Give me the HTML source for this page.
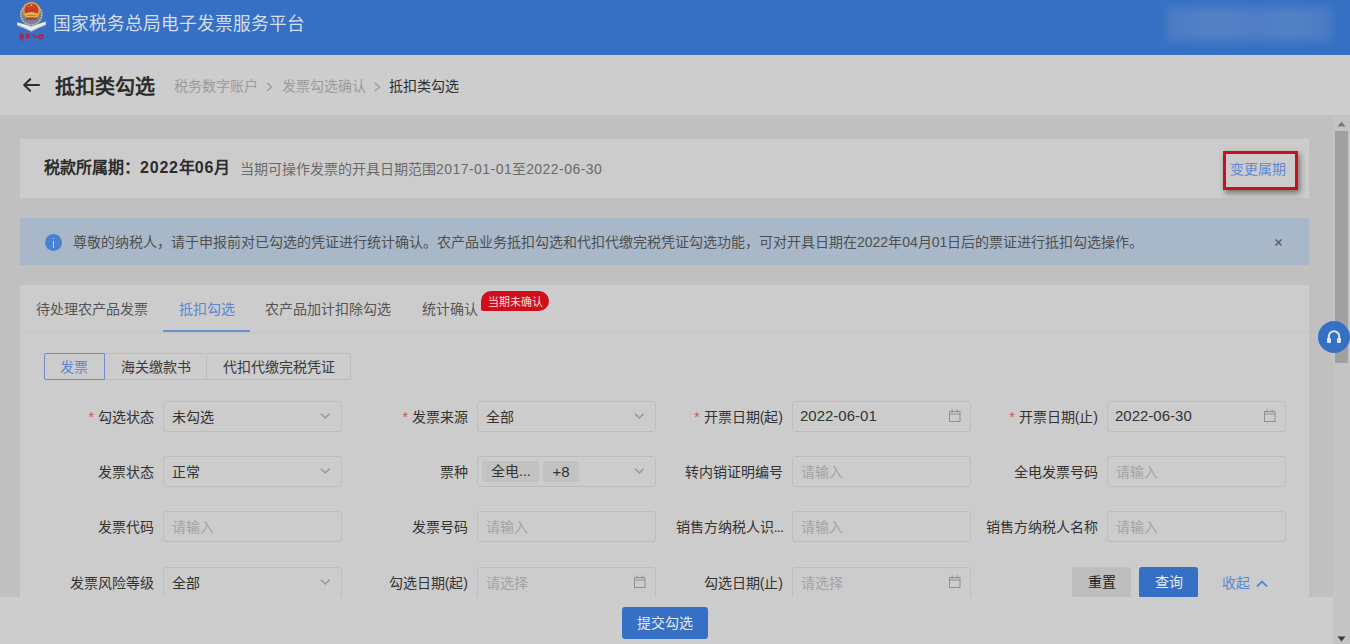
<!DOCTYPE html>
<html lang="zh-CN"><head><meta charset="utf-8">
<style>
*{box-sizing:border-box;margin:0;padding:0}
html,body{width:1350px;height:644px;overflow:hidden;background:#c0c0c0;font-family:"Liberation Sans",sans-serif;color:#333;font-weight:500}
.abs{position:absolute}
#hdr{left:0;top:0;width:1350px;height:55px;background:#3570c4}
#hdr .title{left:52.5px;top:12.5px;font-weight:400;font-size:17.7px;line-height:22px;color:#d6deeb;white-space:nowrap}
#blur{left:1166px;top:7px;width:166px;height:34px;background:linear-gradient(90deg,#4a7bc4 0%,#5582c6 30%,#4f7dc5 55%,#5482c6 75%,#4a7ac4 100%);filter:blur(4px)}
#sub{left:0;top:55px;width:1350px;height:60px;background:#cdcdcd}
#main{left:0;top:115px;width:1333px;height:482px;background:#c0c0c0}
.card{position:absolute;left:20px;width:1289px;background:#cccccc}
#c1{top:139px;height:59px}
#alert{left:20px;top:218px;width:1289px;height:47px;background:#a9b8c9}
#c2{top:285px;height:312px}
#footer{left:0;top:597px;width:1333px;height:47px;background:#cdcdcd}
#sb{left:1333px;top:115px;width:17px;height:529px;background:#c4c4c4}
.nw{white-space:nowrap}
</style></head>
<body>
<div id="hdr" class="abs">
  <svg class="abs" style="left:14px;top:0" width="36" height="44" viewBox="0 0 36 44">
    <ellipse cx="17.3" cy="14.5" rx="11.6" ry="11.5" fill="#7d828c"/>
    <ellipse cx="17.3" cy="14.5" rx="10.4" ry="10.3" fill="none" stroke="#c3c6cc" stroke-width="1.3" stroke-dasharray="1.6 1.1"/>
    <circle cx="17.4" cy="10.4" r="8.7" fill="#d6a545"/>
    <circle cx="17.4" cy="10.4" r="7" fill="#cc392b"/>
    <path d="M11.2 13.6 Q17.4 10.6 23.6 13.6 L23.6 17.2 L11.2 17.2Z" fill="#e3b24b"/>
    <path d="M12.8 15.5 H22" stroke="#cc392b" stroke-width="0.6"/>
    <circle cx="17.4" cy="5.2" r="1" fill="#e6b64a"/>
    <circle cx="14.9" cy="6.8" r="0.55" fill="#e6b64a"/><circle cx="19.9" cy="6.8" r="0.55" fill="#e6b64a"/>
    <path d="M11.5 17.4 L23.3 17.4 L22.2 20 L12.6 20Z" fill="#b3403a"/>
    <path d="M3.2 22.2 Q10 24 17.3 26.6 Q24.6 24 31.8 21.6 L31.8 25 Q24.6 27.6 17.3 31.4 Q10 27.6 3.2 25.4Z" fill="#e8eaef"/>
    <path d="M3.6 25.2 Q10 27.4 17.3 31.2 Q24.6 27.4 31.6 24.8" stroke="#a9adb6" stroke-width="0.8" fill="none"/>
    <path d="M5.5 38 H9.5 M7.5 32.5 V41.5 M5.8 35 H9.2 V37.6 H5.8Z" stroke="#b52538" stroke-width="1.4" fill="none"/>
    <path d="M11.5 35 Q13.5 33.5 15.5 35.5 Q14.5 38.3 11.8 38.3 M12.3 36 L15 37.8" stroke="#b52538" stroke-width="1.5" fill="none"/>
    <path d="M17.5 35.3 Q19 34.3 20 36 L20.5 38.3 M21.5 35 L23 37.8" stroke="#b52538" stroke-width="1.4" fill="none"/>
    <path d="M24.5 36 Q26.5 34 28.5 35.5 Q29.5 37.8 26.5 38.8 Q25 38.3 24.5 36Z M27.5 34.3 L29.5 36.2" stroke="#b52538" stroke-width="1.5" fill="none"/>
  </svg>
  <div class="abs title">国家税务总局电子发票服务平台</div>
  <div id="blur" class="abs"></div>
</div>
<div id="sub" class="abs"></div>
  <svg class="abs" style="left:22px;top:77px" width="20" height="16" viewBox="0 0 20 16"><path d="M2.2 8 H17 M8.2 2.2 L2.2 8 L8.2 13.8" stroke="#2e2e2e" stroke-width="2.1" fill="none" stroke-linecap="round" stroke-linejoin="round"/></svg>
<div class="abs nw" style="left:55px;top:74px;font-size:20px;line-height:26px;font-weight:bold;color:#2b2b2b">抵扣类勾选</div>
<div class="abs nw" style="left:174px;top:77px;font-size:14px;line-height:18px;color:#9b9b9b;font-weight:400">税务数字账户</div>
<div class="abs nw" style="left:282px;top:77px;font-size:14px;line-height:18px;color:#9b9b9b;font-weight:400">发票勾选确认</div>
<div class="abs nw" style="left:388.5px;top:77px;font-size:14px;line-height:18px;color:#2f2f2f">抵扣类勾选</div>
<svg class="abs" style="left:265px;top:82px" width="9" height="10" viewBox="0 0 9 10"><path d="M2 1 L6.5 5 L2 9" stroke="#9b9b9b" stroke-width="1.3" fill="none"/></svg>
<svg class="abs" style="left:372.5px;top:82px" width="9" height="10" viewBox="0 0 9 10"><path d="M2 1 L6.5 5 L2 9" stroke="#9b9b9b" stroke-width="1.3" fill="none"/></svg>
<div id="main" class="abs"></div>
<div class="card" id="c1"></div>
<div class="abs nw" style="left:44px;top:158px;font-size:16px;line-height:20px;font-weight:bold;color:#2b2b2b">税款所属期：<span style="letter-spacing:0.8px">2022</span>年<span style="letter-spacing:0.8px">06</span>月</div>
<div class="abs nw" style="left:240px;top:160px;font-size:14px;line-height:18px;color:#6a6a6a;font-weight:400">当期可操作发票的开具日期范围<span style="letter-spacing:0.45px">2017-01-01</span>至<span style="letter-spacing:0.45px">2022-06-30</span></div>
<div class="abs" style="left:1223px;top:151px;width:75px;height:39px;border:3px solid #c8101e;box-shadow:2px 3px 6px rgba(0,0,0,0.45)"></div>
<div class="abs nw" style="left:1230px;top:160px;font-size:14px;line-height:18px;color:#6089d0;font-weight:400">变更属期</div>
<div id="alert" class="abs"></div>
<div class="abs" style="left:45px;top:234px;width:17px;height:17px;border-radius:50%;background:#4a80d2"></div>
<div class="abs" style="left:52.5px;top:237.5px;width:1.6px;height:1.8px;background:#c9d5e8"></div>
<div class="abs" style="left:52.5px;top:240.5px;width:1.6px;height:7px;background:#c9d5e8"></div>
<div class="abs nw" style="left:73px;top:233px;font-size:14px;line-height:18px;color:#4f4f4f;font-weight:400">尊敬的纳税人，请于申报前对已勾选的凭证进行统计确认。农产品业务抵扣勾选和代扣代缴完税凭证勾选功能，可对开具日期在2022年04月01日后的票证进行抵扣勾选操作。</div>
<svg class="abs" style="left:1274px;top:238px" width="9" height="9" viewBox="0 0 9 9"><path d="M1.5 1.5 L7.5 7.5 M7.5 1.5 L1.5 7.5" stroke="#59606a" stroke-width="1.5"/></svg>
<div class="card" id="c2"></div>
<div class="abs" style="left:20px;top:332px;width:1289px;height:1px;background:#c4c4c4"></div>
<div class="abs" style="left:163px;top:330px;width:87px;height:2px;background:#6890d0"></div>
<div class="abs nw" style="left:35.5px;top:300px;font-size:14px;line-height:18px;font-weight:400;color:#555">待处理农产品发票</div>
<div class="abs nw" style="left:178.5px;top:300px;font-size:14px;line-height:18px;font-weight:400;color:#5b87d0">抵扣勾选</div>
<div class="abs nw" style="left:265px;top:300px;font-size:14px;line-height:18px;font-weight:400;color:#555">农产品加计扣除勾选</div>
<div class="abs nw" style="left:421.5px;top:300px;font-size:14px;line-height:18px;font-weight:400;color:#555">统计确认</div>
<div class="abs nw" style="left:481px;top:291px;width:68px;height:20px;border-radius:10px 10px 10px 2px;background:#cf0f1b;color:#f3dede;font-size:11px;line-height:22px;text-align:center;font-weight:400">当期未确认</div>
<div class="abs" style="left:44px;top:353px;width:307px;height:27px;border:1px solid #bdbdbd;border-radius:2px"></div>
<div class="abs" style="left:206px;top:353px;width:1px;height:27px;background:#bdbdbd"></div>
<div class="abs" style="left:44px;top:353px;width:61px;height:27px;border:1px solid #6890d0;border-radius:2px 0 0 2px"></div>
<div class="abs nw" style="left:60px;top:358px;font-size:14px;line-height:18px;color:#5b87d0">发票</div>
<div class="abs nw" style="left:121px;top:358px;font-size:14px;line-height:18px;color:#3a3a3a">海关缴款书</div>
<div class="abs nw" style="left:223px;top:358px;font-size:14px;line-height:18px;color:#3a3a3a">代扣代缴完税凭证</div>
<div class="abs nw" style="left:-37px;top:408px;width:191px;text-align:right;font-size:14px;line-height:18px;color:#333"><span style="color:#d0505a;margin-right:4px">*</span>勾选状态</div>
<div class="abs" style="left:163px;top:401px;width:179px;height:31px;border:1px solid #bdbdbd;border-radius:3px"></div>
<div class="abs nw" style="left:172px;top:408px;font-size:14px;line-height:18px;color:#333">未勾选</div>
<svg class="abs" style="left:320px;top:412px" width="12" height="8" viewBox="0 0 12 8"><path d="M1 1.8 L5.3 6 L9.6 1.8" stroke="#969696" stroke-width="1.5" fill="none"/></svg>
<div class="abs nw" style="left:277px;top:408px;width:191px;text-align:right;font-size:14px;line-height:18px;color:#333"><span style="color:#d0505a;margin-right:4px">*</span>发票来源</div>
<div class="abs" style="left:477px;top:401px;width:179px;height:31px;border:1px solid #bdbdbd;border-radius:3px"></div>
<div class="abs nw" style="left:486px;top:408px;font-size:14px;line-height:18px;color:#333">全部</div>
<svg class="abs" style="left:634px;top:412px" width="12" height="8" viewBox="0 0 12 8"><path d="M1 1.8 L5.3 6 L9.6 1.8" stroke="#969696" stroke-width="1.5" fill="none"/></svg>
<div class="abs nw" style="left:592px;top:408px;width:191px;text-align:right;font-size:14px;line-height:18px;color:#333"><span style="color:#d0505a;margin-right:4px">*</span>开票日期(起)</div>
<div class="abs" style="left:792px;top:401px;width:179px;height:31px;border:1px solid #bdbdbd;border-radius:3px"></div>
<div class="abs nw" style="left:800px;top:407px;font-size:15px;line-height:18px;color:#333">2022-06-01</div>
<svg class="abs" style="left:948px;top:409px" width="13" height="13" viewBox="0 0 13 13"><rect x="1.5" y="2.5" width="10.5" height="10" stroke="#909090" stroke-width="1" fill="none"/><path d="M1.5 5 H12 M4.2 0.5 V3.5 M9.2 0.5 V3.5" stroke="#909090" stroke-width="1.1"/></svg>
<div class="abs nw" style="left:907px;top:408px;width:191px;text-align:right;font-size:14px;line-height:18px;color:#333"><span style="color:#d0505a;margin-right:4px">*</span>开票日期(止)</div>
<div class="abs" style="left:1107px;top:401px;width:179px;height:31px;border:1px solid #bdbdbd;border-radius:3px"></div>
<div class="abs nw" style="left:1115px;top:407px;font-size:15px;line-height:18px;color:#333">2022-06-30</div>
<svg class="abs" style="left:1263px;top:409px" width="13" height="13" viewBox="0 0 13 13"><rect x="1.5" y="2.5" width="10.5" height="10" stroke="#909090" stroke-width="1" fill="none"/><path d="M1.5 5 H12 M4.2 0.5 V3.5 M9.2 0.5 V3.5" stroke="#909090" stroke-width="1.1"/></svg>
<div class="abs nw" style="left:-37px;top:463px;width:191px;text-align:right;font-size:14px;line-height:18px;color:#333">发票状态</div>
<div class="abs" style="left:163px;top:456px;width:179px;height:31px;border:1px solid #bdbdbd;border-radius:3px"></div>
<div class="abs nw" style="left:172px;top:463px;font-size:14px;line-height:18px;color:#333">正常</div>
<svg class="abs" style="left:320px;top:467px" width="12" height="8" viewBox="0 0 12 8"><path d="M1 1.8 L5.3 6 L9.6 1.8" stroke="#969696" stroke-width="1.5" fill="none"/></svg>
<div class="abs nw" style="left:277px;top:463px;width:191px;text-align:right;font-size:14px;line-height:18px;color:#333">票种</div>
<div class="abs" style="left:477px;top:456px;width:179px;height:31px;border:1px solid #bdbdbd;border-radius:3px"></div>
<div class="abs nw" style="left:482px;top:461px;width:57px;height:21px;border-radius:3px;background:#c2c2c2;font-size:14px;line-height:21px;color:#333;padding-left:9px">全电...</div>
<div class="abs nw" style="left:543px;top:461px;width:36px;height:21px;border-radius:3px;background:#c2c2c2;font-size:14px;line-height:21px;color:#333;text-align:center;font-size:15px;font-weight:400">+8</div>
<svg class="abs" style="left:634px;top:467px" width="12" height="8" viewBox="0 0 12 8"><path d="M1 1.8 L5.3 6 L9.6 1.8" stroke="#969696" stroke-width="1.5" fill="none"/></svg>
<div class="abs nw" style="left:592px;top:463px;width:191px;text-align:right;font-size:14px;line-height:18px;color:#333">转内销证明编号</div>
<div class="abs" style="left:792px;top:456px;width:179px;height:31px;border:1px solid #bdbdbd;border-radius:3px"></div>
<div class="abs nw" style="left:801px;top:463px;font-size:14px;line-height:18px;color:#a3a3a3">请输入</div>
<div class="abs nw" style="left:907px;top:463px;width:191px;text-align:right;font-size:14px;line-height:18px;color:#333">全电发票号码</div>
<div class="abs" style="left:1107px;top:456px;width:179px;height:31px;border:1px solid #bdbdbd;border-radius:3px"></div>
<div class="abs nw" style="left:1116px;top:463px;font-size:14px;line-height:18px;color:#a3a3a3">请输入</div>
<div class="abs nw" style="left:-37px;top:518px;width:191px;text-align:right;font-size:14px;line-height:18px;color:#333">发票代码</div>
<div class="abs" style="left:163px;top:511px;width:179px;height:31px;border:1px solid #bdbdbd;border-radius:3px"></div>
<div class="abs nw" style="left:172px;top:518px;font-size:14px;line-height:18px;color:#a3a3a3">请输入</div>
<div class="abs nw" style="left:277px;top:518px;width:191px;text-align:right;font-size:14px;line-height:18px;color:#333">发票号码</div>
<div class="abs" style="left:477px;top:511px;width:179px;height:31px;border:1px solid #bdbdbd;border-radius:3px"></div>
<div class="abs nw" style="left:486px;top:518px;font-size:14px;line-height:18px;color:#a3a3a3">请输入</div>
<div class="abs nw" style="left:592px;top:518px;width:191px;text-align:right;font-size:14px;line-height:18px;color:#333">销售方纳税人识<span style="letter-spacing:-0.8px">...</span></div>
<div class="abs" style="left:792px;top:511px;width:179px;height:31px;border:1px solid #bdbdbd;border-radius:3px"></div>
<div class="abs nw" style="left:801px;top:518px;font-size:14px;line-height:18px;color:#a3a3a3">请输入</div>
<div class="abs nw" style="left:907px;top:518px;width:191px;text-align:right;font-size:14px;line-height:18px;color:#333">销售方纳税人名称</div>
<div class="abs" style="left:1107px;top:511px;width:179px;height:31px;border:1px solid #bdbdbd;border-radius:3px"></div>
<div class="abs nw" style="left:1116px;top:518px;font-size:14px;line-height:18px;color:#a3a3a3">请输入</div>
<div class="abs nw" style="left:-37px;top:574px;width:191px;text-align:right;font-size:14px;line-height:18px;color:#333">发票风险等级</div>
<div class="abs" style="left:163px;top:567px;width:179px;height:40px;border:1px solid #bdbdbd;border-radius:3px"></div>
<div class="abs nw" style="left:172px;top:574px;font-size:14px;line-height:18px;color:#333">全部</div>
<svg class="abs" style="left:320px;top:578px" width="12" height="8" viewBox="0 0 12 8"><path d="M1 1.8 L5.3 6 L9.6 1.8" stroke="#969696" stroke-width="1.5" fill="none"/></svg>
<div class="abs nw" style="left:277px;top:574px;width:191px;text-align:right;font-size:14px;line-height:18px;color:#333">勾选日期(起)</div>
<div class="abs" style="left:477px;top:567px;width:179px;height:40px;border:1px solid #bdbdbd;border-radius:3px"></div>
<div class="abs nw" style="left:486px;top:574px;font-size:14px;line-height:18px;color:#a3a3a3">请选择</div>
<svg class="abs" style="left:633px;top:575px" width="13" height="13" viewBox="0 0 13 13"><rect x="1.5" y="2.5" width="10.5" height="10" stroke="#909090" stroke-width="1" fill="none"/><path d="M1.5 5 H12 M4.2 0.5 V3.5 M9.2 0.5 V3.5" stroke="#909090" stroke-width="1.1"/></svg>
<div class="abs nw" style="left:592px;top:574px;width:191px;text-align:right;font-size:14px;line-height:18px;color:#333">勾选日期(止)</div>
<div class="abs" style="left:792px;top:567px;width:179px;height:40px;border:1px solid #bdbdbd;border-radius:3px"></div>
<div class="abs nw" style="left:801px;top:574px;font-size:14px;line-height:18px;color:#a3a3a3">请选择</div>
<svg class="abs" style="left:948px;top:575px" width="13" height="13" viewBox="0 0 13 13"><rect x="1.5" y="2.5" width="10.5" height="10" stroke="#909090" stroke-width="1" fill="none"/><path d="M1.5 5 H12 M4.2 0.5 V3.5 M9.2 0.5 V3.5" stroke="#909090" stroke-width="1.1"/></svg>
<div class="abs nw" style="left:1072px;top:567px;width:59px;height:31px;border-radius:3px;background:#bebebe;font-size:14px;line-height:31px;text-align:center;color:#222">重置</div>
<div class="abs nw" style="left:1139px;top:567px;width:59px;height:31px;border-radius:3px;background:#3570c4;font-size:14px;line-height:31px;text-align:center;color:#e4eaf4">查询</div>
<div class="abs nw" style="left:1222px;top:574px;font-size:14px;line-height:18px;color:#5b87d0">收起</div>
<svg class="abs" style="left:1256px;top:579px" width="12" height="9" viewBox="0 0 12 9"><path d="M1 7.5 L6 2.5 L11 7.5" stroke="#5b87d0" stroke-width="1.8" fill="none"/></svg>
<div id="footer" class="abs"></div>
<div class="abs nw" style="left:622px;top:607px;width:86px;height:32px;border-radius:3px;background:#3570c4;font-size:14px;line-height:32px;text-align:center;color:#e4eaf4">提交勾选</div>
<div id="sb" class="abs"></div>
<div class="abs" style="left:1335px;top:131px;width:13px;height:232px;background:#a0a0a0"></div>
<svg class="abs" style="left:1337px;top:121px" width="9" height="6" viewBox="0 0 9 6"><path d="M0.5 5.5 L4.5 0.5 L8.5 5.5Z" fill="#7a7a7a"/></svg>
<svg class="abs" style="left:1337px;top:636px" width="9" height="6" viewBox="0 0 9 6"><path d="M0.5 0.5 L4.5 5.5 L8.5 0.5Z" fill="#3a3a3a"/></svg>
<div class="abs" style="left:1318px;top:321px;width:32px;height:32px;border-radius:50%;background:#3570c4"></div>
<svg class="abs" style="left:1326px;top:329px" width="16" height="16" viewBox="0 0 16 16"><path d="M2.8 10.5 V7.5 A5.2 5.2 0 0 1 13.2 7.5 V10.5" stroke="#dfe6f1" stroke-width="2" fill="none"/><rect x="1" y="9" width="4" height="5" rx="0.8" fill="#dfe6f1"/><rect x="11" y="9" width="4" height="5" rx="0.8" fill="#dfe6f1"/></svg>
</body></html>
